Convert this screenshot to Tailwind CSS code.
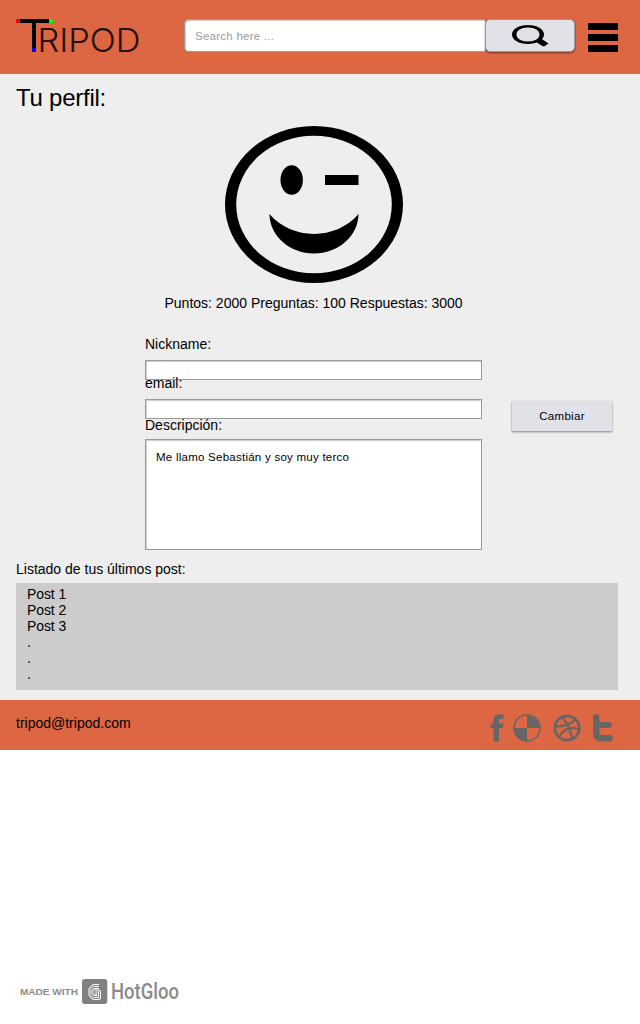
<!DOCTYPE html>
<html lang="es">
<head>
<meta charset="utf-8">
<title>Tripod - Tu perfil</title>
<script src="https://cdn.jsdelivr.net/npm/@tailwindcss/browser@4"></script>
</head>
<body class="w-[640px] h-[1024px] overflow-hidden bg-white text-black font-['Liberation_Sans',sans-serif] text-sm leading-4">
<header class="flex h-[74px] bg-[#dd6643]">
  <svg class="ml-4 mt-[19px] shrink-0 overflow-visible" width="126" height="40" viewBox="0 0 126 40">
    <text x="21.500" y="32.500" font-family="Inter" font-weight="300" font-size="33" textLength="103" lengthAdjust="spacingAndGlyphs" fill="#20100a">RIPOD</text>
    <path d="M3 0H34V4H20V30H16V4H3Z"/>
    <rect width="4" height="4" fill="#f00"/><rect x="33" width="4" height="4" fill="#0f0"/><rect x="16" y="29" width="4" height="4" fill="#00f"/>
  </svg>
  <div class="ml-[42px] mt-[19px] flex h-[33px] w-[391px] shrink-0">
    <div class="h-[33px] w-[301px] rounded-l-[5px] border border-r-0 border-[#999] bg-white pl-[10px] pt-[8px] text-[11.5px] leading-4 tracking-[0.25px] text-[#9b9ba3] shadow-[inset_1px_1px_1px_#ccc]">Search here ...</div>
    <button class="flex h-[33px] w-[90px] justify-center rounded-[5px] border border-[#999] bg-[#e1e2e8] pt-[4px] shadow-[0_1px_2px_rgba(0,0,0,0.5)]">
      <svg width="38" height="24" viewBox="0 0 38 24"><path fill-rule="evenodd" d="M17 1C26 1 33 5 33 10.500C33 16 26 20 17 20C8 20 1 16 1 10.500C1 5 8 1 17 1ZM17 3.500C10 3.500 5.500 6.500 5.500 10.500C5.500 14.500 10 17.500 17 17.500C24 17.500 28.500 14.500 28.500 10.500C28.500 6.500 24 3.500 17 3.500Z"/><path d="M25 17L30 14.500L37.500 19.500L33 22.500L30.500 21.500L26 18.500Z"/></svg>
    </button>
  </div>
  <div class="ml-[13px] mt-[23px] flex w-[30px] flex-col gap-1">
    <div class="h-[7px] bg-black"></div><div class="h-[7px] bg-black"></div><div class="h-[7px] bg-black"></div>
  </div>
</header>
<main class="h-[626px] bg-[#eee] pt-[10px]">
  <h1 class="ml-4 h-[28px] text-2xl leading-7 tracking-[-0.25px]">Tu perfil:</h1>
  <svg class="ml-[225px] mt-[14px] block" width="178" height="157" viewBox="0 0 178 157">
    <path fill-rule="evenodd" d="M0 78.500A89 78.500 0 1 1 178 78.500A89 78.500 0 1 1 0 78.500ZM11.200 78.500A77.800 68.800 0 1 0 166.800 78.500A77.800 68.800 0 1 0 11.200 78.500Z"/>
    <ellipse cx="66.700" cy="54" rx="11.200" ry="14.800"/><rect x="100" y="49" width="33.500" height="10"/>
    <path d="M44.500 88C67 114.500 111 114.500 133.500 88C133.500 109.500 113.500 127.500 89 127.500C64.500 127.500 44.500 109.500 44.500 88Z"/>
  </svg>
  <p class="ml-[164.500px] mt-[12px] whitespace-nowrap">Puntos: 2000 Preguntas: 100 Respuestas: 3000</p>
  <div class="flex h-[250px] pt-[25px]">
    <div class="ml-[145px] w-[337px]">
      <div class="h-4">Nickname:</div>
      <div class="mt-[8px] h-[20px] border border-[#999] bg-white shadow-[inset_1px_1px_1px_#ccc]"></div>
      <div class="relative -mt-[5px] h-4">email:</div>
      <div class="mt-[8px] h-[20px] border border-[#999] bg-white shadow-[inset_1px_1px_1px_#ccc]"></div>
      <div class="relative -mt-[2px] h-4">Descripción:</div>
      <div class="mt-[6px] h-[111px] border border-[#999] bg-white pl-[10px] pt-[9px] text-[11.5px] leading-4 tracking-[0.25px] shadow-[inset_1px_1px_1px_#ccc]">Me llamo Sebastián y soy muy terco</div>
    </div>
    <button class="ml-[30px] mt-[65px] h-[30px] w-[100px] bg-[#e1e2e8] text-[11.5px] leading-[30px] tracking-[0.3px] shadow-[0_1px_2px_rgba(0,0,0,0.45)]">Cambiar</button>
  </div>
  <h2 class="ml-4 h-[22px]">Listado de tus últimos post:</h2>
  <ul class="ml-4 h-[107px] w-[602px] bg-[#ccc] pl-[11px] pt-[3px] tracking-[-0.1px]">
    <li>Post 1</li><li>Post 2</li><li>Post 3</li><li>.</li><li>.</li><li>.</li>
  </ul>
</main>
<footer class="flex h-[50px] bg-[#dd6643]">
  <p class="ml-4 mt-[15px] w-[474px]">tripod@tripod.com</p>
  <svg class="mt-[14px] shrink-0" width="124" height="28" viewBox="0 0 124 28" fill="#666">
    <path d="M3.500 27.500V14H.5V9.500H3.500V6.500C3.500 2.500 5.500 .5 9 .5H13.500V5H11C9.500 5 9 5.500 9 7V9.500H13.500L13 14H9V27.500Z"/>
    <circle cx="37" cy="14" r="13" fill="none" stroke="#666" stroke-width="1.500"/><path d="M37 1A13 13 0 0 1 50 14H37ZM37 14V27A13 13 0 0 1 24 14Z"/>
    <g fill="none" stroke="#666" stroke-width="2.200"><circle cx="77" cy="14" r="12.200" stroke-width="2.800"/><path d="M72 3C78 10 81 17 82 25M65 12.500C74 12.500 82 10 85.500 5M69 23C73 16 80 12.500 89 15"/></g>
    <path d="M103 3.500A3.200 3.200 0 0 1 109.400 3.500V8H119A3 3 0 0 1 119 14H109.400V18C109.400 20 110.500 21 112 21H119.500A3.200 3.200 0 0 1 119.500 27.400H111C106 27.400 103 24 103 19Z"/>
  </svg>
</footer>
<div class="mt-[229px] ml-[19px] flex h-[25px] items-center text-[#858585]">
  <svg width="170" height="32" viewBox="0 -3 170 32" class="shrink-0 overflow-visible">
    <text x="1" y="16.300" font-family="Liberation Sans" font-weight="700" font-size="9.500" textLength="58" lengthAdjust="spacingAndGlyphs" fill="#8b8b8b">MADE WITH</text>
    <rect x="63" width="25.300" height="25" rx="3" fill="#808080"/>
    <g fill="none" stroke-linejoin="round">
      <path d="M80 7.500H75L72 10.500V15.500L75 18.500H79.500V13H76" stroke="#fff" stroke-width="5"/>
      <path d="M80 7.500H75L72 10.500V15.500L75 18.500H79.500V13H76" stroke="#808080" stroke-width="3"/>
      <path d="M80 7.500H75L72 10.500V15.500L75 18.500H79.500V13H76" stroke="#fff" stroke-width="1"/>
    </g>
    <text x="92" y="20.300" font-family="Roboto" font-weight="500" font-size="21.500" textLength="68" lengthAdjust="spacingAndGlyphs" fill="#8b8b8b">HotGloo</text>
  </svg>
</div>
</body>
</html>
